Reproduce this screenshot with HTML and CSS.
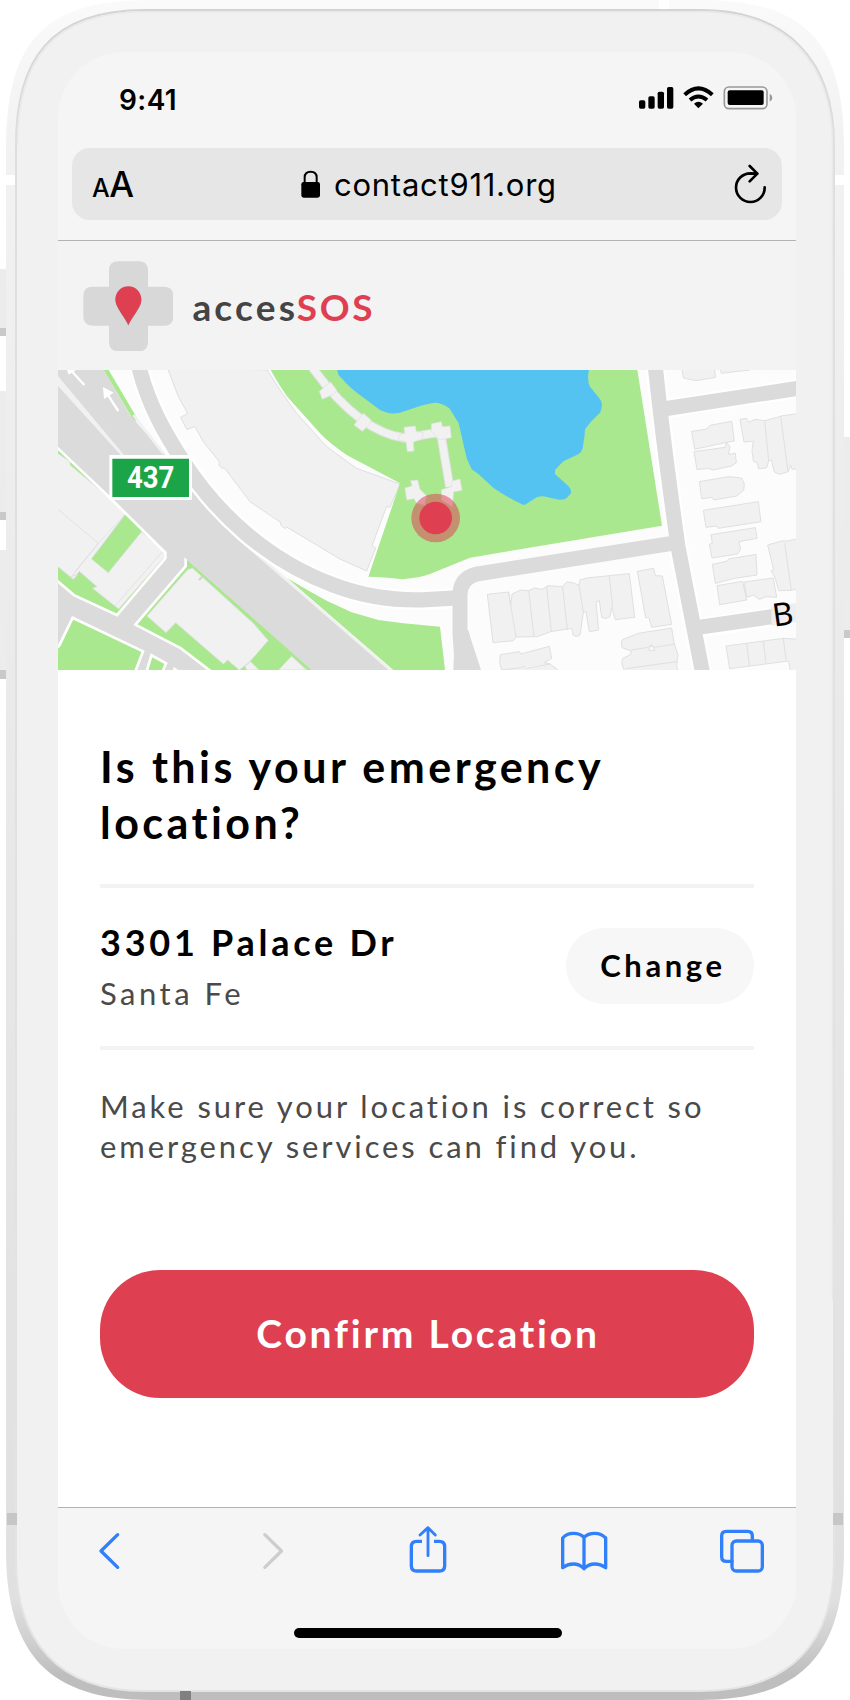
FILE: index.html
```html
<!DOCTYPE html>
<html lang="en">
<head>
<meta charset="utf-8">
<title>accesSOS</title>
<link rel="stylesheet" href="styles.css">
</head>
<body>
<div class="phone">
  <svg class="frame" viewBox="0 0 850 1700" aria-hidden="true">
    <defs>
      <linearGradient id="rim" x1="0" y1="0" x2="0" y2="1">
        <stop offset="0" stop-color="#fafafa"/><stop offset=".08" stop-color="#f2f2f2"/>
        <stop offset=".5" stop-color="#e8e8e8"/><stop offset=".94" stop-color="#e0e0e0"/>
        <stop offset=".965" stop-color="#d0d0d0"/><stop offset=".985" stop-color="#bebebe"/><stop offset="1" stop-color="#bebebe"/>
      </linearGradient>
      <linearGradient id="edge" x1="0" y1="0" x2="0" y2="1">
        <stop offset="0" stop-color="#d4d4d4"/><stop offset=".08" stop-color="#dedede"/>
        <stop offset="1" stop-color="#e4e4e4"/>
      </linearGradient>
    </defs>
    <g fill="#ececec">
      <rect x="0" y="269" width="7" height="66"/><rect x="0" y="391" width="7" height="128"/><rect x="0" y="550" width="7" height="128"/><rect x="843" y="437" width="7" height="200"/>
    </g>
    <g fill="#c9c9c9">
      <rect x="0" y="328" width="6" height="8"/><rect x="0" y="512" width="6" height="8"/><rect x="0" y="670" width="6" height="9"/><rect x="844" y="630" width="6" height="8"/>
    </g>
    <path fill="url(#rim)" d="M6 150C6 45 40 0 150 0H700C809 0 844 45 844 150V1550C844 1655 800 1700 700 1700H150C50 1700 6 1655 6 1550Z"/>
    <path fill="#f1f1f1" stroke="url(#edge)" stroke-width="2" d="M16 145C16 60 50 10 145 10H700C787 10 834 60 834 145V1560C834 1640 793 1691 700 1691H145C57 1691 16 1640 16 1560Z"/>
    <path fill="none" stroke="#e9e9e9" stroke-width="1.5" d="M17.5 145C17.5 62 51 11.7 145 11.7H700C786 11.7 832.500 62 832.500 145V1300"/>
    <g fill="#fff"><rect x="6" y="175" width="9" height="10"/><rect x="835" y="175" width="9" height="10"/><rect x="659" y="0" width="10" height="9"/></g>
    <g fill="#c6c6c6"><rect x="7" y="1513" width="10" height="12"/><rect x="833" y="1513" width="10" height="12"/></g>
    <rect x="180" y="1691" width="11" height="9" fill="#808080"/>
  </svg>

  <main class="screen">
    <div class="status">
      <span class="time">9:41</span>
      <svg class="indicators" viewBox="640 256 408 74" aria-hidden="true">
        <rect x="643" y="302" width="19" height="25" rx="5"/><rect x="671" y="290" width="19" height="37" rx="5"/><rect x="699" y="276" width="19" height="51" rx="5"/><rect x="727" y="262" width="19" height="65" rx="5"/>
        <path fill="none" stroke="#000" stroke-width="12" d="M780 285Q821 247 863 285M796 301Q821 280 847 301"/>
        <path d="M808 312Q821 301 835 312L821 326Z"/>
        <rect x="899" y="262" width="128" height="65" rx="14" fill="none" stroke="#999" stroke-width="5"/>
        <rect x="909" y="272" width="108" height="44" rx="6"/>
        <path fill="#999" d="M1035 282Q1043 286 1043 294T1035 306Z"/>
      </svg>
    </div>
    <div class="address">
      <span class="reader"><small>A</small>A</span>
      <span class="url">
        <svg class="lock" viewBox="904 508 57 84" aria-hidden="true"><rect x="905" y="544" width="56" height="47" rx="7"/><path fill="none" stroke="#000" stroke-width="6" d="M915 547V530Q915 513 933 513T951 530V547"/></svg>
        <span>contact911.org</span>
      </span>
      <svg class="reload" viewBox="928 490 98 118" aria-hidden="true"><path fill="none" stroke="#000" stroke-width="8" stroke-linecap="round" stroke-linejoin="round" d="M1020 560A43 43 0 1 1 977 518L998 519M975 496L998 519L975 542"/></svg>
    </div>

    <header class="brand">
      <svg class="logo" viewBox="248 785 272 272" aria-hidden="true">
        <path fill="#d8d8d8" d="M354 786H415Q443 786 443 814V862H491Q519 862 519 890V951Q519 979 491 979H443V1028Q443 1056 415 1056H354Q326 1056 326 1028V979H277Q249 979 249 951V890Q249 862 277 862H326V814Q326 786 354 786Z"/>
        <path fill="#999" d="M384 864C361 864 346 881 346 903C346 927 370 948 384 979C398 948 423 927 423 903C423 881 407 864 384 864Z"/>
        <path fill="#de4052" d="M384 861C361 861 345 879 345 901C345 920 365 941 384 976C403 941 423 920 423 901C423 879 407 861 384 861Z"/>
      </svg>
      <span class="name">acces<b>SOS</b></span>
    </header>

    <svg class="map" viewBox="24 30 2214 900" role="img" aria-label="Map of the detected location">
      <g fill="#a9e88e">
        <path d="M0 240L24 262L180 412L345 575L346 597L202 768L70 707L24 670L0 650Z"/>
        <path d="M403 592L790 930H480L390 868L252 795L405 620Z"/>
        <path d="M24 850L66 768L282 873L258 930H24ZM302 882L351 908L341 930H285ZM368 922L386 930H368Z"/>
        <path d="M712 655Q770 690 830 722L905 757L985 780L1060 790L1170 800L1185 930H1030Z"/>
      </g>
      <g fill="#f1f1f1" stroke="#dfdfdf" stroke-width="3">
        <path d="M0 265L60 305L60 315L180 415L228 460L145 550L78 632L82 645L70 658L0 600Z"/>
        <path d="M228 460L125 596L175 638L275 515L343 572V592L206 747L128 685L141 680L88 634L78 645L64 650L145 550"/>
        <path d="M412 630L427 624L610 790L655 842L602 903L568 930L533 900L520 912L377 788L348 818L291 768Z"/>
        <path d="M585 918L602 905L628 930H590ZM724 888L770 930H685Z"/>
        <path d="M340 20L355 30L385 110L413 160L392 172L411 209L434 199L460 245L508 305L507 315L516 326L522 322L600 425L693 488L692 495L705 506L710 501L870 597L950 633L977 564L966 557L1010 439L1020 442L1050 372L920 325L885 300L830 260L740 160L690 90L652 30Z"/>
      </g>
      <path fill="#a9e88e" d="M232 467L270 513L167 631L125 596ZM655 842L724 888L685 930H628L602 903Z"/>
      <path fill="none" stroke="#e3e3e3" stroke-width="3" d="M24 448L145 550M340 572L195 738"/>
      <path fill="#a9e88e" d="M155 20H170L268 186L250 180Z"/>
      <path fill="none" stroke="#fff" stroke-width="16" stroke-linejoin="round" d="M10 246L24 260L180 408L350 576V596L202 770L70 709L24 670L0 650V880L24 855L66 768L284 872L258 940H284L302 880L353 908L340 940H370V920L400 940H484L390 868L250 795L403 617V590"/>
      <path fill="#dbdbdb" d="M10 246L24 260L180 408L350 576V596L202 770L70 709L24 670L0 650V880L24 855L66 768L284 872L258 940H284L302 880L353 908L340 940H370V920L400 940H484L390 868L250 795L403 617V590L795 935L1020 935L480 455L420 390L220 170L24 10Z"/>
      <path fill="#dbdbdb" d="M24 10H150L240 165L350 290L425 390L520 490L1025 935H790L350 545L24 220Z"/>
      <path fill="#f1f1f1" d="M24 48L222 285H212L24 78Z"/>
      <path fill="none" stroke="#f1f1f1" stroke-width="8" d="M250 165L340 280M428 385L475 445L560 530L1026 934"/>
      <path fill="none" stroke="#fff" stroke-width="60" d="M262 0C290 130 350 230 400 305C500 460 650 600 850 675C950 713 1050 722 1130 719L1225 713"/>
      <path fill="none" stroke="#dbdbdb" stroke-width="46" d="M262 0C290 130 350 230 400 305C500 460 650 600 850 675C950 713 1050 722 1130 719L1235 713"/>
      <path fill="#dbdbdb" d="M330 285H392V410L420 405L470 460L400 430Z"/>
      <g stroke="#fff" stroke-width="7" fill="#fff"><path d="M103 75L60 28M205 153L165 92"/><path stroke="none" d="M159 81L191 98L162 117ZM50 28L78 30L56 44Z"/></g>
      <path fill="#c6dcb9" d="M445 658L455 647L460 650L449 662Z"/>

      <path fill="#a9e88e" d="M662 30Q690 80 712 110L815 225Q840 250 890 285L1050 370L955 650Q1000 650 1057 658Q1110 653 1140 642L1260 593L1836 497L1762 30Z"/>
      <path fill="#55c3f2" d="M862 30Q862 45 875 55Q900 85 930 105L990 150Q1005 157 1020 160Q1035 161 1050 158L1110 138Q1135 130 1155 128Q1180 130 1198 145L1226 190L1250 295L1265 328L1285 342L1330 383Q1365 408 1410 430Q1418 436 1425 434L1460 412Q1470 408 1480 409L1528 419Q1543 420 1550 414L1564 398Q1563 385 1555 378L1515 342V330L1540 304L1585 283Q1595 277 1598 265L1604 225Q1604 210 1607 205L1625 183L1650 158Q1655 150 1656 132Q1653 121 1648 115L1620 80Q1610 60 1617 30Z"/>
      <path fill="none" stroke="#dfdfdf" stroke-width="28" d="M785 20C850 110 950 220 1065 234L1160 218L1174 230L1199 380"/>
      <path fill="none" stroke="#f1f1f1" stroke-width="22" d="M785 20C850 110 950 220 1065 234L1160 218L1174 230L1199 380"/>
      <g fill="#f1f1f1" stroke="#dfdfdf" stroke-width="2">
        <path d="M808 94L842 66L860 90L853 101L817 118ZM912 195L940 160L963 180L960 192L937 214Z"/>
        <path d="M1062 202L1096 198L1099 215L1120 217L1115 238L1090 246L1092 273L1072 275L1068 245L1045 240L1048 224L1064 220Z"/>
        <path d="M1144 191L1174 185L1177 200L1200 198L1204 233L1170 239L1144 215ZM1206 363L1230 357L1236 391L1211 396L1207 440L1175 420L1174 389L1204 380Z"/>
        <path d="M1082 362L1103 360L1110 388L1130 408L1124 435L1100 430L1092 416L1070 420L1065 384L1086 378Z"/>
      </g>
      <path fill="none" stroke="#fff" stroke-width="58" stroke-linejoin="round" d="M1816 20Q1840 250 1884 560L1958 940M1840 147L2250 84M1940 805L2250 758"/>
      <g fill="none" stroke="#dbdbdb" stroke-width="45">
        <path d="M1816 20Q1840 250 1884 560L1958 940M1840 147L2250 84M1940 803L2250 758"/>
        <path d="M1885 547L1280 642Q1230 655 1230 705V820L1238 940"/>
      </g>
      <path fill="#dbdbdb" d="M1255 810L1262 835L1293 930H1210L1215 810Z"/>
      <g transform="translate(1110 0)" fill="#f1f1f1" stroke="#e0e0e0" stroke-width="3">
        <path d="M202 703L266 696L272 738L276 702L302 690L325 692L343 684L366 688L384 677L428 680L440 666L458 668L477 676L480 660L500 654L628 641L644 772L586 779L575 742L570 770Q560 780 545 772L538 722L528 726L536 810L508 815L498 755L490 757L480 825Q470 834 459 825L456 805L392 815L352 830L288 831L280 842L219 848Z"/>
        <path d="M266 698L288 831M326 692L342 830M380 681L394 814M428 680L442 810M477 676L490 757M568 649L578 742"/>
        <path d="M652 634L701 625L706 647L727 648L755 793L695 802L687 773L677 773Z"/>
        <path d="M241 884L298 875L302 882L388 859L395 895L373 908L390 912L412 928V950H250L239 908ZM245 930L302 923L312 918L318 925L390 912"/>
        <path d="M604 846Q605 837 617 835L655 820L755 804L762 848L774 885L770 915L776 950H620L605 910L608 895L630 885L634 873L606 863ZM634 870L683 862L695 855L703 862L765 852M616 926L770 905"/>
        <path fill="#fcfcfc" d="M694 855L686 870L705 872Z"/>
        <path d="M785 20L790 54L828 62L887 52L882 20ZM900 20L904 40L990 30V20Z"/>
        <path d="M815 214L858 208L870 196L935 184L943 243L919 247L930 260L925 283L946 280L949 308L935 318L878 330L864 325L831 329L822 275L916 262L919 247L824 268Z"/>
        <path d="M960 178L980 175L986 187L1005 178L1034 182L1075 171L1082 168L1140 160V325L1116 328L1112 315L1104 335L1080 343L1063 336L1054 300L1046 302L1040 323L1016 327L1012 309L1000 304L996 272L1000 244L972 246ZM1034 182L1046 302M1082 168L1104 335"/>
        <path d="M838 365L925 350L965 354L973 372L971 391L950 408L882 420L876 412L845 416ZM850 451L1015 425L1023 485L895 505L890 498L858 502Z"/>
        <path d="M873 524L1006 503L1011 535L957 545L962 568L952 582L876 594L868 553L877 550ZM877 613L920 604L926 597L1008 583L1011 645L943 655L886 670ZM891 677L968 664L980 720L899 734Z"/>
        <path d="M972 666L1060 654L1070 712L1038 710L1018 718L1001 706L980 711ZM1043 555L1085 543L1100 543L1140 535V685L1114 691L1076 692L1066 655L1054 632L1061 629ZM1094 550L1114 691"/>
        <path d="M918 858L1090 835L1140 838V940H1112L1106 903L929 926ZM980 850L988 916M1030 843L1038 910M1090 835L1098 900"/>
      </g>
      <circle cx="1157" cy="474" r="73" fill="#de4052" fill-opacity=".52"/>
      <circle cx="1157" cy="474" r="49" fill="#de4052"/>
      <path fill="#fff" d="M178 285H426V420H178Z"/><path fill="#1ba548" d="M187 296H417V411H187Z"/>
      <text class="route" x="302" y="384" text-anchor="middle" textLength="142" lengthAdjust="spacingAndGlyphs">437</text>
      <path fill="#eee" d="M2164 740L2250 727V785L2164 797Z"/>
      <text class="street" transform="translate(2172 800) rotate(-8)">B</text>
    </svg>

    <section class="content">
      <h1>Is this your emergency<br>location?</h1>
      <div class="place">
        <div>
          <div class="street-name">3301 Palace Dr</div>
          <div class="city">Santa Fe</div>
        </div>
        <button class="change">Change</button>
      </div>
      <p class="hint">Make sure your location is correct so<br>emergency services can find you.</p>
      <button class="confirm">Confirm Location</button>
    </section>

    <nav class="toolbar">
      <svg viewBox="258 144 138 138"><path d="M353 164L303 213L353 262"/></svg>
      <svg class="off" viewBox="748.5 144 138 138"><path d="M793 164L843 213L793 262"/></svg>
      <svg viewBox="-60 144 138 138"><path class="butt" d="M-9 184H-25Q-41 184-41 200V257Q-41 273-25 273H43Q59 273 59 257V200Q59 184 43 184H27"/><path class="thin" d="M9 227V144M-15 165L9 143L31 165"/></svg>
      <svg viewBox="408 144 138 138"><path d="M477 172Q466 160 445 160Q425 160 413 174V263Q428 252 445 252Q464 252 477 266Q491 252 509 252Q527 252 542 263V174Q529 160 509 160Q489 160 477 172V264"/></svg>
      <svg viewBox="882 144 138 138"><path d="M921 244H904Q890 244 890 230V168Q890 154 904 154H968Q982 154 982 168V182"/><rect x="921" y="183" width="91" height="90" rx="13"/></svg>
    </nav>
    <div class="home"></div>
  </main>
</div>
</body>
</html>
```
FILE: styles.css
```css
* { box-sizing: border-box; }
body { margin: 0; background: #fff; font-family: Lato, sans-serif; }
button { border: 0; padding: 0; font-family: inherit; }
.phone { position: relative; width: 850px; height: 1700px; padding: 52px 54px 51px 58px; overflow: hidden; }
.frame { position: absolute; inset: 0; width: 850px; height: 1700px; }
.screen { position: relative; width: 738px; height: 1597px; border-radius: 66px; background: #f5f5f5; overflow: hidden; display: flex; flex-direction: column; }
.status { height: 96px; padding: 33px 22px 0 61px; display: flex; justify-content: space-between; align-items: flex-start; font-family: Inter, sans-serif; }
.time { font-size: 28px; line-height: 31px; font-weight: 600; letter-spacing: .4px; }
.indicators { width: 136px; height: 24.7px; }
.address { height: 72px; margin: 0 14px; padding: 0 15px 0 20px; border-radius: 18px; background: #e6e6e6; display: flex; align-items: center; font-family: Inter, sans-serif; }
.reader { font-size: 35px; line-height: 40px; width: 52px; padding-top: 4px; white-space: nowrap; font-weight: 500; letter-spacing: -.5px; }
.reader small { font-size: 25px; }
.url { display: flex; align-items: center; gap: 14px; margin-left: 157px; font-size: 31px; line-height: 40px; letter-spacing: .75px; }
.url span { padding-top: 2px; }
.lock { width: 19px; height: 28px; }
.reload { width: 32.7px; height: 39.3px; margin-left: auto; }
.brand { height: 130px; margin-top: 20px; padding-left: 24.7px; border-top: 1px solid #b3b3b3; background: #f3f3f3; display: flex; align-items: center; }
.logo { width: 90.7px; height: 90.7px; margin-top: 1px; }
.name { margin: 2px 0 0 19px; font-size: 37px; font-weight: 700; color: #444; letter-spacing: 3.2px; }
.name b { color: #de4052; font-weight: 700; letter-spacing: 2.7px; margin-left: -1.500px; }
.map { display: block; width: 738px; height: 300px; flex: none; overflow: hidden; background: #fcfcfc; }
.route { font: 700 92px Roboto, sans-serif; fill: #fff; }
.street { font: 400 96px "Noto Sans", sans-serif; fill: #000; }
.content { flex: 1; background: #fff; padding: 69px 42px 0; }
h1 { margin: 0; font-size: 43px; line-height: 56px; font-weight: 700; letter-spacing: 3.45px; white-space: nowrap; }
.place { height: 166px; margin-top: 33px; border: solid #f3f3f3; border-width: 4px 0; display: flex; justify-content: space-between; align-items: center; }
.street-name { font-size: 36px; line-height: 52px; font-weight: 700; letter-spacing: 3.75px; }
.city { font-size: 31px; line-height: 50px; color: #4a4a4a; letter-spacing: 3.5px; }
.change { width: 188px; height: 76px; margin-top: -2px; padding: 0 0 2px 6px; border-radius: 38px; background: #f7f7f7; color: #000; font-size: 31px; font-weight: 700; letter-spacing: 3.6px; }
.hint { margin: 36px 0 0; font-size: 31px; line-height: 40px; color: #4a4a4a; letter-spacing: 2.9px; white-space: nowrap; }
.confirm { display: block; width: 654px; height: 128px; margin-top: 104px; padding: 0 0 2px 2px; border-radius: 60px; background: #de4052; color: #fff; font-size: 39px; font-weight: 700; letter-spacing: 2.8px; }
.toolbar { height: 101px; flex: none; border-top: 1px solid #b3b3b3; padding: 20px 0 0 28px; display: grid; grid-template-columns: 163.5px 155.5px 156px 158px 46px; }
.toolbar svg { width: 46px; height: 46px; overflow: visible; fill: none; stroke: #307ffb; stroke-width: 10; stroke-linecap: round; stroke-linejoin: round; }
.toolbar .off { stroke: #cdcdcd; }
.toolbar .butt { stroke-linecap: butt; }
.toolbar .thin { stroke-width: 8.5; }
.home { width: 268px; height: 10px; flex: none; margin: 20px 0 11px 236px; border-radius: 5px; background: #000; }
```
